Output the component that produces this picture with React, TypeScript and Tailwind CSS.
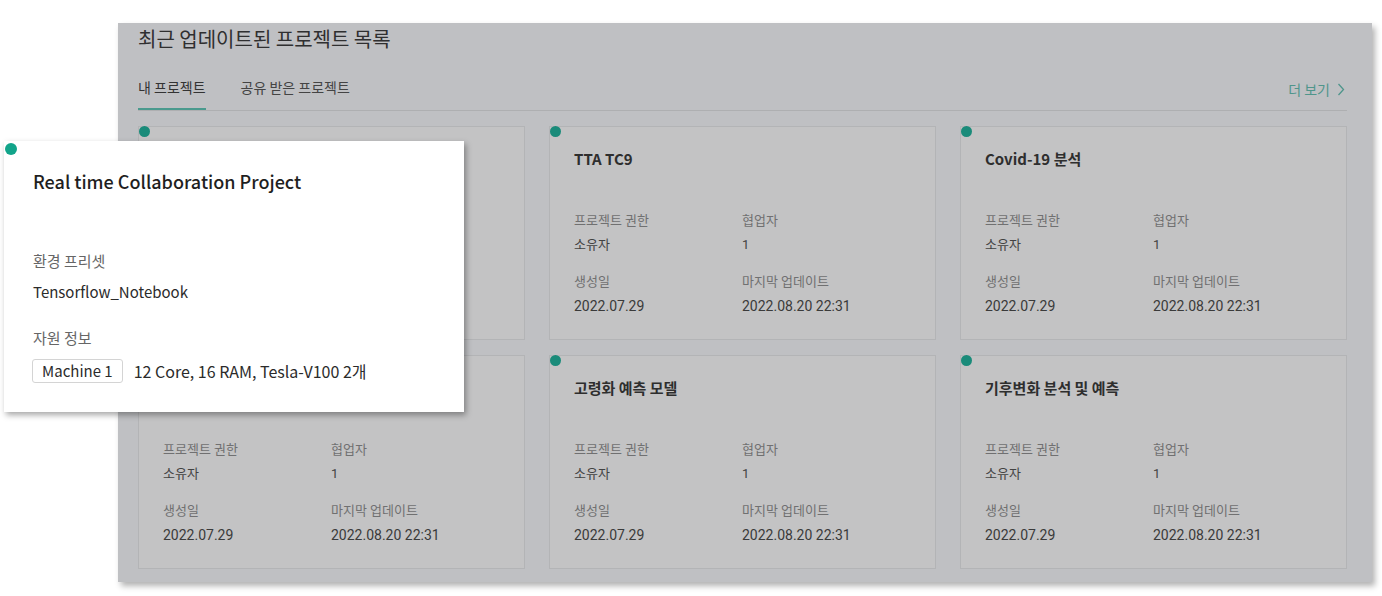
import React from 'react';

interface Project {
  name: string;
  role: string;
  members: string;
  createdAt: string;
  updatedAt: string;
}

const projects: Project[] = [
  { name: 'Real time Collaboration Project', role: '소유자', members: '1', createdAt: '2022.07.29', updatedAt: '2022.08.20 22:31' },
  { name: 'TTA TC9', role: '소유자', members: '1', createdAt: '2022.07.29', updatedAt: '2022.08.20 22:31' },
  { name: 'Covid-19 분석', role: '소유자', members: '1', createdAt: '2022.07.29', updatedAt: '2022.08.20 22:31' },
  { name: '이미지 분류 모델', role: '소유자', members: '1', createdAt: '2022.07.29', updatedAt: '2022.08.20 22:31' },
  { name: '고령화 예측 모델', role: '소유자', members: '1', createdAt: '2022.07.29', updatedAt: '2022.08.20 22:31' },
  { name: '기후변화 분석 및 예측', role: '소유자', members: '1', createdAt: '2022.07.29', updatedAt: '2022.08.20 22:31' },
];

const font = { fontFamily: 'Roboto, "Noto Sans CJK KR", sans-serif' };
const krFont = { fontFamily: '"Noto Sans CJK KR", "Noto Sans", sans-serif' };

const ProjectCard: React.FC<{ project: Project }> = ({ project }) => (
  <div className="relative h-[214px] border border-[#b3b4b6] bg-[#c3c3c4] px-6 pt-[22px]">
    <span className="absolute left-[0px] top-[-1px] h-[11px] w-[11px] rounded-full bg-[#1a8b7a]" />
    <div className="h-5 text-[15px] font-bold leading-5 text-[#2e2e2e]" style={krFont}>
      {project.name}
    </div>
    <div className="mt-[43px] grid grid-cols-[168px_1fr] gap-y-[19px]" style={font}>
      <div>
        <div className="text-[13px] leading-[18px] text-[#707071]">프로젝트 권한</div>
        <div className="mt-[6px] text-[13px] leading-[18px] text-[#424242]">{project.role}</div>
      </div>
      <div>
        <div className="text-[13px] leading-[18px] text-[#707071]">협업자</div>
        <div className="mt-[6px] text-[13px] leading-[18px] text-[#424242]">{project.members}</div>
      </div>
      <div>
        <div className="text-[13px] leading-[18px] text-[#707071]">생성일</div>
        <div className="mt-[6px] text-[14px] leading-[18px] text-[#3a3a3a]">{project.createdAt}</div>
      </div>
      <div>
        <div className="text-[13px] leading-[18px] text-[#707071]">마지막 업데이트</div>
        <div className="mt-[6px] text-[14px] leading-[18px] text-[#3a3a3a]">{project.updatedAt}</div>
      </div>
    </div>
  </div>
);

const DetailPopover: React.FC = () => (
  <div
    className="absolute left-[4px] top-[141px] h-[271px] w-[460px] bg-white pl-[29px] pt-[28px] shadow-[2px_3px_6px_rgba(0,0,0,0.35)]"
    style={krFont}
  >
    <span className="absolute left-[1px] top-[2px] h-[12px] w-[12px] rounded-full bg-[#12a48a]" />
    <div className="text-[18px] font-medium leading-6 text-[#1f1f1f]">Real time Collaboration Project</div>
    <div className="mt-[57px] text-[15px] leading-[22px] text-[#666]">환경 프리셋</div>
    <div className="mt-[9px] text-[15px] leading-[22px] text-[#2b2b2b]">Tensorflow_Notebook</div>
    <div className="mt-[24px] text-[15px] leading-[22px] text-[#666]">자원 정보</div>
    <div className="mt-[10px] flex items-center">
      <span className="-ml-px flex h-[24px] items-center rounded-[3px] border border-[#d4d4d4] px-[9px] text-[15px] text-[#2b2b2b]">
        Machine 1
      </span>
      <span className="ml-[11px] text-[16px] text-[#2b2b2b]">12 Core, 16 RAM, Tesla-V100 2개</span>
    </div>
  </div>
);

export default function App() {
  return (
    <div className="relative h-[596px] w-[1382px] overflow-hidden bg-white">
      <div className="ml-[118px] mt-[23px] h-[559px] w-[1254px] bg-[#bfc0c3] pl-5 pr-[25px] pt-[4px] shadow-[3px_4px_6px_rgba(0,0,0,0.3)]" style={krFont}>
        <h1 className="text-[20px] leading-6 text-[#2f2f30]">최근 업데이트된 프로젝트 목록</h1>
        <div className="mt-[27px] flex items-end border-b border-[#aeafb1]">
          <div className="flex gap-[35px]">
            <div className="border-b-2 border-[#4a9a8e] pb-[12px] text-[14px] leading-[18px] text-[#333]">내 프로젝트</div>
            <div className="pb-[12px] text-[14px] leading-[18px] text-[#444]">공유 받은 프로젝트</div>
          </div>
          <div className="ml-auto mr-[2px] flex items-center gap-[7px] pb-[12px] text-[14px] leading-[18px] text-[#4f958b]">
            더 보기
            <svg width="8" height="13" viewBox="0 0 8 13" fill="none">
              <path d="M1.5 1 L6.5 6.5 L1.5 12" stroke="#4f958b" strokeWidth="1.3" />
            </svg>
          </div>
        </div>
        <div className="mt-[15px] grid grid-cols-3 gap-x-6 gap-y-[15px]">
          {projects.map((p) => (
            <ProjectCard key={p.name} project={p} />
          ))}
        </div>
      </div>
      <DetailPopover />
    </div>
  );
}
